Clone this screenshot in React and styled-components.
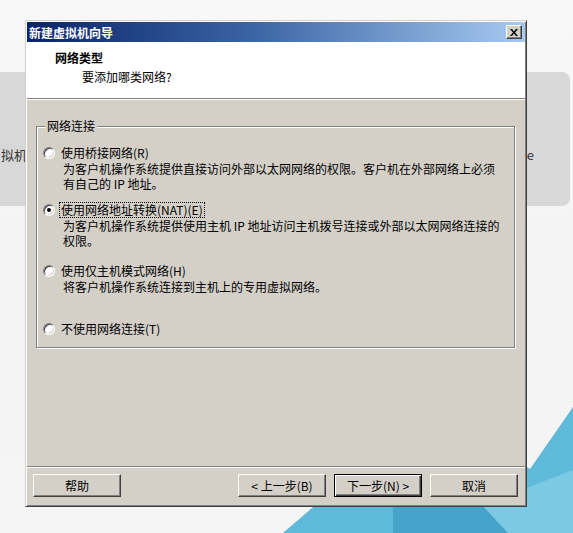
import React from 'react'
import styled, { createGlobalStyle } from 'styled-components'

const GlobalStyle = createGlobalStyle`
  html, body {
    margin: 0;
    padding: 0;
  }
  body {
    background: #f4f4f4;
    font-family: "Noto Sans CJK SC", "Noto Sans", sans-serif;
    font-size: 12px;
    color: #000;
  }
`

const Desktop = styled.div`
  position: relative;
  width: 573px;
  height: 533px;
  overflow: hidden;
  box-sizing: border-box;
  padding: 20px 0 0 25px;
  background: linear-gradient(180deg, #f8f8f8 0%, #f3f3f3 55%, #f5f5f5 100%);
`

const Band = styled.div`
  position: absolute;
  left: 0;
  top: 72px;
  width: 570px;
  height: 134px;
  box-sizing: border-box;
  padding: 75px 36px 0 1px;
  display: flex;
  align-items: flex-start;
  justify-content: space-between;
  background: #d8d8d8;
  border-radius: 0 8px 8px 0;
  font-size: 13px;
  line-height: 16px;
  color: #333;
`

const Backdrop = styled.svg`
  position: absolute;
  left: 0;
  top: 0;
`

const Dialog = styled.div`
  position: relative;
  z-index: 1;
  width: 502px;
  height: 487px;
  box-sizing: border-box;
  display: flex;
  flex-direction: column;
  padding: 1px;
  background: #d4d0c8;
  border: 1px solid;
  border-color: #d4d0c8 #404040 #404040 #d4d0c8;
  box-shadow: inset 1px 1px 0 #fff, inset -1px -1px 0 #808080;
`

const TitleBar = styled.div`
  height: 20px;
  flex: none;
  display: flex;
  align-items: center;
  padding: 0 3px 0 2px;
  background: linear-gradient(90deg, #0a246a 0%, #3b64a4 45%, #a6caf0 100%);
  color: #fff;
  font-weight: 700;
  font-size: 12px;
`

const CloseButton = styled.button`
  margin-left: auto;
  width: 16px;
  height: 14px;
  padding: 0;
  box-sizing: border-box;
  display: flex;
  align-items: center;
  justify-content: center;
  background: #d4d0c8;
  border: 1px solid;
  border-color: #fff #404040 #404040 #fff;
  box-shadow: inset -1px -1px 0 #808080;
`

const Header = styled.div`
  height: 56px;
  flex: none;
  box-sizing: border-box;
  padding: 8px 0 0 28px;
  background: #fff;
`

const HeaderTitle = styled.div`
  font-weight: 700;
  line-height: 16px;
`

const HeaderSub = styled.div`
  margin-top: 3px;
  padding-left: 27px;
  line-height: 16px;
`

const Rule = styled.div`
  flex: none;
  height: 0;
  border-top: 1px solid #808080;
  border-bottom: 1px solid #fff;
`

const Body = styled.div`
  flex: 1;
  padding: 19px 10px 0 9px;
`

const Group = styled.fieldset`
  margin: 0;
  padding: 12px 6px 10px 6px;
  border: 1px solid #808080;
  box-shadow: 1px 1px 0 #fff, inset 1px 1px 0 #fff;
`

const Legend = styled.legend`
  margin-left: 2px;
  padding: 0 2px;
  line-height: 14px;
  background: #d4d0c8;
`

const Option = styled.div`
  margin-top: ${({ $gap }) => $gap}px;
`

const OptionRow = styled.div`
  display: flex;
  align-items: center;
  gap: 6px;
  height: 16px;
`

const Radio = styled.span`
  width: 12px;
  height: 12px;
  flex: none;
  box-sizing: border-box;
  display: flex;
  align-items: center;
  justify-content: center;
  border-radius: 50%;
  background: #fff;
  border: 1px solid;
  border-color: #808080 #fff #fff #808080;
  box-shadow: inset 1px 1px 0 #404040, inset -1px -1px 0 #d4d0c8;
`

const Dot = styled.span`
  width: 4px;
  height: 4px;
  border-radius: 50%;
  background: #000;
`

const OptionLabel = styled.span`
  line-height: 14px;
  padding: 0 1px;
  margin-left: -1px;
  outline: ${({ $focus }) => ($focus ? '1px dotted #000' : 'none')};
`

const Desc = styled.div`
  padding-left: 20px;
  line-height: 15px;
`

const ButtonBar = styled.div`
  flex: none;
  display: flex;
  gap: 8px;
  padding: 6px 7px 8px 6px;
`

const Button = styled.button`
  width: 88px;
  height: 23px;
  padding: 0;
  box-sizing: border-box;
  font-family: inherit;
  font-size: 12px;
  color: #000;
  background: #d4d0c8;
  border: 1px solid;
  border-color: ${({ $primary }) => ($primary ? '#000' : '#fff #404040 #404040 #fff')};
  box-shadow: ${({ $primary }) =>
    $primary
      ? 'inset 1px 1px 0 #fff, inset -1px -1px 0 #404040, inset -2px -2px 0 #808080'
      : 'inset -1px -1px 0 #808080'};
  margin-left: ${({ $push }) => ($push ? 'auto' : '0')};
`

const options = [
  {
    gap: 0,
    label: '使用桥接网络(R)',
    lines: [
      '为客户机操作系统提供直接访问外部以太网网络的权限。客户机在外部网络上必须',
      '有自己的 IP 地址。',
    ],
  },
  {
    gap: 11,
    checked: true,
    label: '使用网络地址转换(NAT)(E)',
    lines: [
      '为客户机操作系统提供使用主机 IP 地址访问主机拨号连接或外部以太网网络连接的',
      '权限。',
    ],
  },
  {
    gap: 15,
    label: '使用仅主机模式网络(H)',
    lines: ['将客户机操作系统连接到主机上的专用虚拟网络。'],
  },
  { gap: 27, label: '不使用网络连接(T)', lines: [] },
]

const App = () => {
  return (
    <>
      <GlobalStyle />
      <Desktop>
        <Band>
          <span>拟机</span>
          <span>e</span>
        </Band>
        <Backdrop width="573" height="533" viewBox="0 0 573 533">
          <polygon points="283,533 430,406 530,469 573,407 573,533" fill="#5fb9d9" />
          <polygon points="393,505 482,505 508,533 393,533" fill="#46a4ca" />
          <polygon points="482,505 573,470 573,533 508,533" fill="#7cc9e4" />
        </Backdrop>
        <Dialog>
          <TitleBar>
            <span>新建虚拟机向导</span>
            <CloseButton>
              <svg width="8" height="7" viewBox="0 0 8 7">
                <path d="M0 0h2l2 2.5L6 0h2L5 3.5 8 7H6L4 4.5 2 7H0l3-3.5z" fill="#000" />
              </svg>
            </CloseButton>
          </TitleBar>
          <Header>
            <HeaderTitle>网络类型</HeaderTitle>
            <HeaderSub>要添加哪类网络?</HeaderSub>
          </Header>
          <Rule />
          <Body>
            <Group>
              <Legend>网络连接</Legend>
              {options.map((o) => (
                <Option key={o.label} $gap={o.gap}>
                  <OptionRow>
                    <Radio>{o.checked && <Dot />}</Radio>
                    <OptionLabel $focus={o.checked}>{o.label}</OptionLabel>
                  </OptionRow>
                  {o.lines.length > 0 && (
                    <Desc>
                      {o.lines.map((line, i) => (
                        <React.Fragment key={line}>
                          {i > 0 && <br />}
                          {line}
                        </React.Fragment>
                      ))}
                    </Desc>
                  )}
                </Option>
              ))}
            </Group>
          </Body>
          <Rule />
          <ButtonBar>
            <Button>帮助</Button>
            <Button $push>&lt; 上一步(B)</Button>
            <Button $primary>下一步(N) &gt;</Button>
            <Button>取消</Button>
          </ButtonBar>
        </Dialog>
      </Desktop>
    </>
  )
}

export default App
